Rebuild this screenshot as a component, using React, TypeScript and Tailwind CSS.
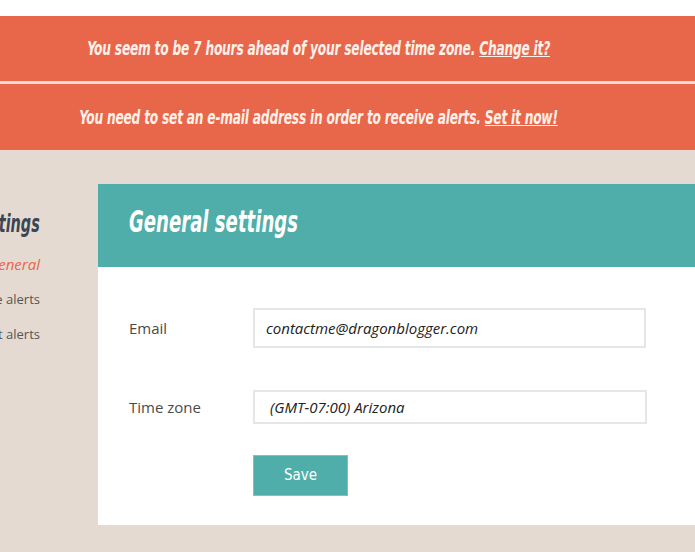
const cond = { fontFamily: '"DejaVu Sans Condensed", "DejaVu Sans", sans-serif' };
const body = { fontFamily: '"Open Sans", "Noto Sans", sans-serif' };

const Banner = ({ text, link, h }: { text: string; link: string; h: string }) => (
  <div className={`bg-[#e8664a] ${h} flex items-center justify-center pr-[58px]`}>
    <p className="text-[#fdf1ea] text-[19px] italic font-bold tracking-[-0.3px] scale-x-[0.715] whitespace-nowrap" style={cond}>
      {text} <a className="underline font-semibold">{link}</a>
    </p>
  </div>
);

const App = () => (
  <div className="min-h-screen bg-[#e5dad1] overflow-hidden">
    {/* top strip */}
    <div className="h-4 bg-white" />

    {/* warnings */}
    <Banner h="h-[65px]" text="You seem to be 7 hours ahead of your selected time zone." link="Change it?" />
    <div className="h-[3px] bg-[#f2d9cf]" />
    <Banner h="h-[66px]" text="You need to set an e-mail address in order to receive alerts." link="Set it now!" />

    <div className="flex pt-[34px]">
      {/* sidebar, mostly cut off by the window */}
      <div className="w-[98px] shrink-0 flex flex-col items-end pr-[58px]">
        <h2 className="text-[#3b4652] text-[25px] italic font-bold whitespace-nowrap mt-[25px] leading-[30px] scale-x-[0.64] origin-right" style={cond}>
          Account settings
        </h2>
        <ul className="text-[13px] text-[#555] flex flex-col items-end whitespace-nowrap" style={body}>
          <li className="text-[#e8664a] italic text-[15px] mt-[13px] leading-[24px]">General</li>
          <li className="mt-[11px] leading-[24px]">Price alerts</li>
          <li className="mt-[11px] leading-[24px]">Product alerts</li>
        </ul>
      </div>

      {/* panel */}
      <div className="flex-1 min-w-[700px]">
        <div className="bg-[#4faea9] h-[83px] flex items-center pl-[31px] pb-[8px]">
          <h1 className="text-white text-[30px] italic font-bold scale-x-[0.67] origin-left whitespace-nowrap" style={cond}>
            General settings
          </h1>
        </div>
        <div className="bg-white pt-[41px] pb-[29px] pl-[31px] text-[15px] text-[#4a4a4a]" style={body}>
          <div className="flex items-center">
            <label className="w-[124px]">Email</label>
            <div className="w-[393px] h-[40px] border-2 border-[#e6e6e6] flex items-center px-[11px] italic text-[#222]">
              contactme@dragonblogger.com
            </div>
          </div>
          <div className="flex items-center mt-[42px]">
            <label className="w-[124px]">Time zone</label>
            <div className="w-[394px] h-[34px] border-2 border-[#e6e6e6] flex items-center px-[15px] italic text-[#222]">
              (GMT-07:00) Arizona
            </div>
          </div>
          <button
            className="ml-[124px] mt-[31px] w-[95px] h-[41px] bg-[#4faea9] border border-[#c8ad72] text-white text-[15px]"
            style={cond}
          >
            Save
          </button>
        </div>
      </div>
    </div>
  </div>
);

export default App;
